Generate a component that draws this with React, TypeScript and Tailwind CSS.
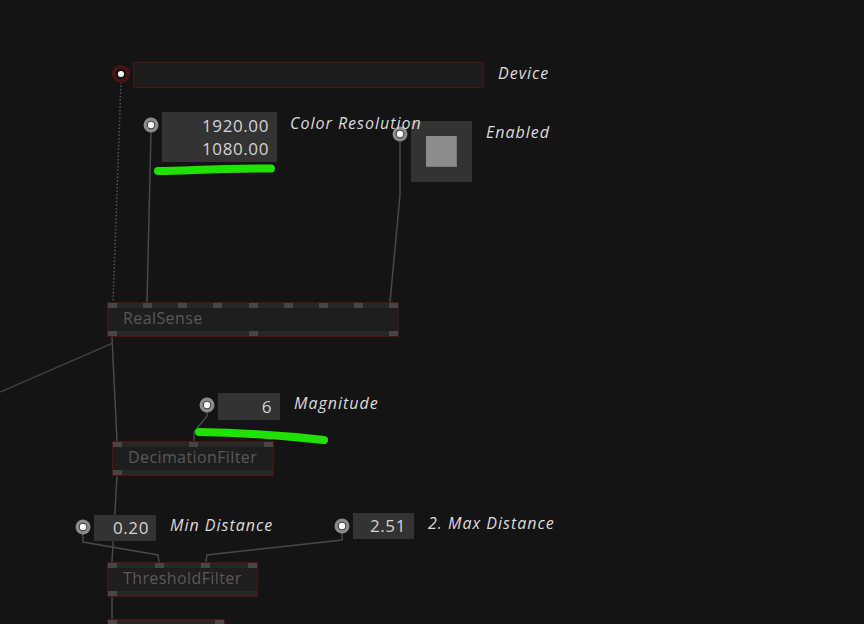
import React from "react";

// node pin strip (top / bottom row of a node)
function Strip({ n, justify }: { n: number; justify: string }) {
  return (
    <div className={`flex h-[5px] bg-[#272727] ${justify}`}>
      {Array.from({ length: n }).map((_, i) => (
        <div key={i} className="h-[5px] w-[9px] bg-[#464646]" />
      ))}
    </div>
  );
}

function GraphNode({
  pos,
  label,
  topPins,
  topJustify,
  bottomPins,
  bottomJustify,
}: {
  pos: string;
  label: string;
  topPins: number;
  topJustify: string;
  bottomPins: number;
  bottomJustify: string;
}) {
  return (
    <div className={`absolute flex h-[35px] flex-col border border-[#4c1414] bg-[#1e1e1e] ${pos}`}>
      <Strip n={topPins} justify={topJustify} />
      <div className="h-[23px] pl-[15px] text-[16px] leading-[20px] tracking-[0.4px] text-[#595959]">{label}</div>
      <Strip n={bottomPins} justify={bottomJustify} />
    </div>
  );
}

function Pin({ x, y }: { x: number; y: number }) {
  return (
    <g>
      <circle cx={x} cy={y} r={7.5} fill="#8a8a8a" />
      <circle cx={x} cy={y} r={4.2} fill="#3a3a3a" />
      <circle cx={x} cy={y} r={3.2} fill="#ffffff" />
    </g>
  );
}

function Label({ children, nudge = "" }: { children: React.ReactNode; nudge?: string }) {
  return (
    <span className={`relative z-10 whitespace-nowrap text-[16px] italic leading-[20px] tracking-[1px] text-[#dcdcdc] ${nudge}`}>
      {children}
    </span>
  );
}

const valueBox = "bg-[#333333] text-right text-[17px] tracking-[0.6px] text-[#d4d4d4]";

export default function App() {
  return (
    <div className="relative h-[624px] w-[864px] overflow-hidden bg-[#141414] font-['Open_Sans','Noto_Sans',sans-serif]">
      {/* links, pins and marker strokes */}
      <svg className="absolute inset-0" width={864} height={624}>
        <g fill="none" strokeWidth={1.5}>
          <path d="M121 82 L113 302" stroke="#555" strokeDasharray="1.5 2" />
          <path d="M151 132 L147 302" stroke="#484848" />
          <path d="M400 140 L400 195 L390 302" stroke="#484848" />
          <path d="M112 337 L117 441" stroke="#484848" />
          <path d="M113 343 L0 392" stroke="#3e3e3e" />
          <path d="M207 412 L207 416 L194 432 L194 441" stroke="#484848" />
          <path d="M117 476 L112 562" stroke="#484848" />
          <path d="M83 533 L83 542 L158 555 L159 562" stroke="#484848" />
          <path d="M342 532 L342 540 L207 555 L206 562" stroke="#484848" />
          <path d="M112 597 L112 619" stroke="#484848" />
        </g>

        <circle cx={121} cy={74} r={9} fill="#4b1313" />
        <circle cx={121} cy={74} r={5.5} fill="#1a1010" />
        <circle cx={121} cy={74} r={3} fill="#ffffff" />
        <Pin x={151} y={125} />
        <Pin x={400} y={134} />
        <Pin x={207} y={405} />
        <Pin x={83} y={527} />
        <Pin x={342} y={526} />

        <g fill="none" stroke="#22e000" strokeWidth={8} strokeLinecap="round">
          <path d="M158 171 C 190 171, 210 168, 271 168.5" />
          <path d="M199 432 Q 260 433 324 440" />
        </g>
      </svg>

      {/* Device input */}
      <div className="absolute left-[133px] top-[62px] flex items-start gap-[14px]">
        <div className="h-[26px] w-[351px] border border-[#4c1616] bg-[#1c1c1c]" />
        <Label nudge="mt-[1px]">Device</Label>
      </div>

      {/* Enabled toggle */}
      <div className="absolute left-[411px] top-[121px] flex items-start gap-[14px]">
        <div className="flex h-[61px] w-[61px] items-center justify-center bg-[#333333]">
          <div className="h-[31px] w-[31px] border-b border-r border-[#7a7a7a] bg-[#8c8c8c]" />
        </div>
        <Label nudge="mt-[1px]">Enabled</Label>
      </div>

      {/* Color Resolution (label overlaps the toggle, so it comes after it) */}
      <div className="absolute left-[162px] top-[112px] flex items-start gap-[13px]">
        <div className={`flex h-[50px] w-[115px] flex-col items-end pr-[8px] pt-[2px] leading-[23px] ${valueBox}`}>
          <span>1920.00</span>
          <span>1080.00</span>
        </div>
        <Label nudge="mt-[1px]">Color Resolution</Label>
      </div>

      <GraphNode
        pos="left-[107px] top-[302px] w-[292px]"
        label="RealSense"
        topPins={9}
        topJustify="justify-between"
        bottomPins={3}
        bottomJustify="justify-between"
      />

      {/* Magnitude */}
      <div className="absolute left-[218px] top-[393px] flex items-start gap-[14px]">
        <div className={`h-[27px] w-[62px] pr-[8px] leading-[27px] ${valueBox}`}>6</div>
        <Label>Magnitude</Label>
      </div>

      <GraphNode
        pos="left-[112px] top-[441px] w-[162px]"
        label="DecimationFilter"
        topPins={3}
        topJustify="justify-between"
        bottomPins={1}
        bottomJustify="justify-start"
      />

      {/* Min / Max distance */}
      <div className="absolute left-[94px] top-[515px] flex items-start gap-[14px]">
        <div className={`h-[26px] w-[62px] pr-[7px] leading-[26px] ${valueBox}`}>0.20</div>
        <Label>Min Distance</Label>
      </div>
      <div className="absolute left-[353px] top-[513px] flex items-start gap-[14px]">
        <div className={`h-[26px] w-[61px] pr-[8px] leading-[26px] ${valueBox}`}>2.51</div>
        <Label>2. Max Distance</Label>
      </div>

      <GraphNode
        pos="left-[107px] top-[562px] w-[151px]"
        label="ThresholdFilter"
        topPins={4}
        topJustify="justify-between"
        bottomPins={1}
        bottomJustify="justify-start"
      />
      <GraphNode
        pos="left-[107px] top-[619px] w-[118px]"
        label=""
        topPins={2}
        topJustify="justify-between"
        bottomPins={1}
        bottomJustify="justify-start"
      />
    </div>
  );
}
